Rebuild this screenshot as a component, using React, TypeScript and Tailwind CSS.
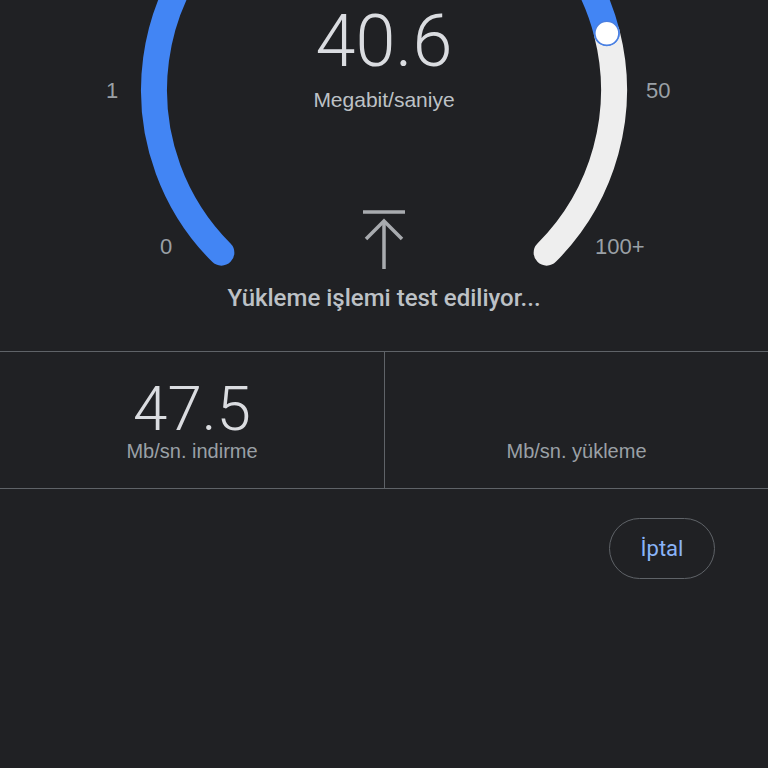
import React from "react";

const cx = 384;
const cy = 90;
const r = 230;

function pt(deg: number) {
    const a = (deg * Math.PI) / 180;
    return [cx + r * Math.cos(a), cy + r * Math.sin(a)];
}

function Gauge() {
    const [sx, sy] = pt(135);
    const [kx, ky] = pt(-14.3);
    const [ex, ey] = pt(45);
    return (
        <svg className="absolute top-0 left-0" width="768" height="351" viewBox="0 0 768 351">
            <path
                d={`M ${kx} ${ky} A ${r} ${r} 0 0 1 ${ex} ${ey}`}
                fill="none"
                stroke="#eeeeee"
                strokeWidth="26"
                strokeLinecap="round"
            />
            <path
                d={`M ${sx} ${sy} A ${r} ${r} 0 1 1 ${kx} ${ky}`}
                fill="none"
                stroke="#4285f4"
                strokeWidth="26"
                strokeLinecap="round"
            />
            <circle cx={kx} cy={ky} r="12" fill="#ffffff" stroke="#4a7fe0" strokeWidth="1.5" />
        </svg>
    );
}

function UploadIcon() {
    return (
        <svg width="44" height="60" viewBox="0 0 44 60" fill="none" stroke="#a8abaf" strokeWidth="3.5">
            <line x1="1" y1="2" x2="43" y2="2" />
            <line x1="22" y1="11" x2="22" y2="59" />
            <polyline points="4,29 22,11 40,29" />
        </svg>
    );
}

export default function App() {
    return (
        <div className="min-h-screen bg-[#202124] font-['Liberation_Sans',Arial,sans-serif] overflow-hidden">
            {/* Gauge */}
            <section className="relative h-[351px] flex flex-col items-center">
                <Gauge />
                <span className="absolute left-[106px] top-[74px] text-[22px] text-[#9aa0a6]">1</span>
                <span className="absolute left-[160px] top-[230px] text-[22px] text-[#9aa0a6]">0</span>
                <span className="absolute left-[646px] top-[74px] text-[22px] text-[#9aa0a6]">50</span>
                <span className="absolute left-[595px] top-[230px] text-[22px] text-[#9aa0a6]">100+</span>

                <div className="relative pt-[2px] font-['Roboto',sans-serif] font-light text-[72px] leading-[1.1] text-[#dadce0]">
                    40.6
                </div>
                <div className="relative mt-[8px] text-[21px] leading-none text-[#bdc1c6]">Megabit/saniye</div>
                <div className="relative mt-[100px]">
                    <UploadIcon />
                </div>
                <div className="relative mt-[16px] font-['Roboto',sans-serif] font-medium text-[24px] leading-none text-[#bdc1c6]">
                    Yükleme işlemi test ediliyor...
                </div>
            </section>

            {/* Results */}
            <section className="grid grid-cols-2 h-[138px] border-y border-[#5f6368]">
                <div className="flex flex-col items-center justify-end pb-[27px]">
                    <div className="font-['Roboto',sans-serif] font-light text-[62px] leading-none text-[#dadce0]">47.5</div>
                    <div className="mt-[1px] text-[20px] leading-none text-[#9aa0a6]">Mb/sn. indirme</div>
                </div>
                <div className="flex flex-col items-center justify-end pb-[27px] border-l border-[#5f6368]">
                    <div className="text-[20px] leading-none text-[#9aa0a6]">Mb/sn. yükleme</div>
                </div>
            </section>

            {/* Actions */}
            <div className="flex justify-end pr-[53px] pt-[29px]">
                <button className="h-[61px] w-[106px] rounded-full border border-[#5f6368] font-['Roboto',sans-serif] text-[22px] text-[#8ab4f8]">
                    İptal
                </button>
            </div>
        </div>
    );
}
